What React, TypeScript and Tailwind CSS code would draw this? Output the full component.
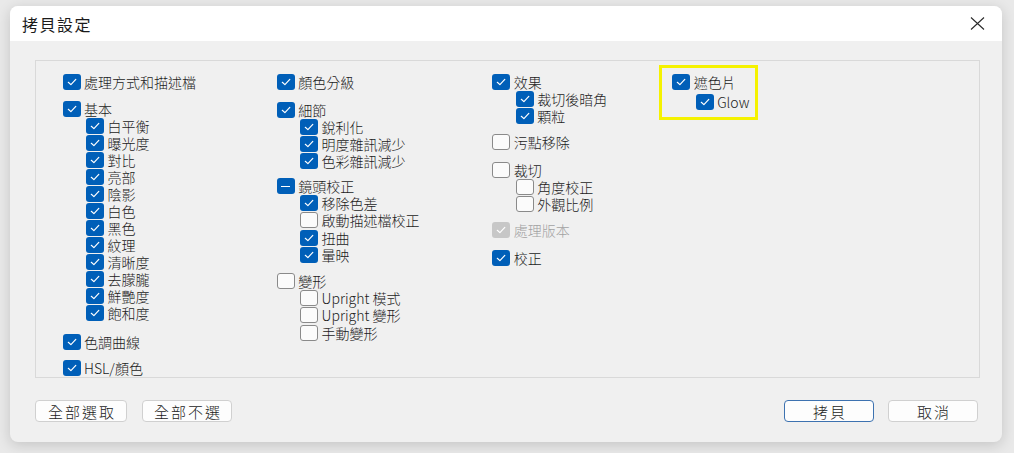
type State = "on" | "off" | "mixed" | "disabled";
type Item = { label: string; state: State; sub?: boolean; mt?: string };

// Row tops were read off the reference; `mt` carries the gap before a new group.
const col1: Item[] = [
  { label: "處理方式和描述檔", state: "on" },
  { label: "基本", state: "on", mt: "mt-[9.6px]" },
  { label: "白平衡", state: "on", sub: true },
  { label: "曝光度", state: "on", sub: true },
  { label: "對比", state: "on", sub: true },
  { label: "亮部", state: "on", sub: true },
  { label: "陰影", state: "on", sub: true },
  { label: "白色", state: "on", sub: true },
  { label: "黑色", state: "on", sub: true },
  { label: "紋理", state: "on", sub: true },
  { label: "清晰度", state: "on", sub: true },
  { label: "去朦朧", state: "on", sub: true },
  { label: "鮮艷度", state: "on", sub: true },
  { label: "飽和度", state: "on", sub: true },
  { label: "色調曲線", state: "on", mt: "mt-[11.5px]" },
  { label: "HSL/顏色", state: "on", mt: "mt-[9.6px]" },
];

const col2: Item[] = [
  { label: "顏色分級", state: "on" },
  { label: "細節", state: "on", mt: "mt-[10.6px]" },
  { label: "銳利化", state: "on", sub: true },
  { label: "明度雜訊減少", state: "on", sub: true },
  { label: "色彩雜訊減少", state: "on", sub: true },
  { label: "鏡頭校正", state: "mixed", mt: "mt-[8.2px]" },
  { label: "移除色差", state: "on", sub: true },
  { label: "啟動描述檔校正", state: "off", sub: true },
  { label: "扭曲", state: "on", sub: true },
  { label: "暈映", state: "on", sub: true },
  { label: "變形", state: "off", mt: "mt-[9.5px]" },
  { label: "Upright 模式", state: "off", sub: true },
  { label: "Upright 變形", state: "off", sub: true },
  { label: "手動變形", state: "off", sub: true },
];

const col3: Item[] = [
  { label: "效果", state: "on" },
  { label: "裁切後暗角", state: "on", sub: true },
  { label: "顆粒", state: "on", sub: true },
  { label: "污點移除", state: "off", mt: "mt-[8.7px]" },
  { label: "裁切", state: "off", mt: "mt-[10.4px]" },
  { label: "角度校正", state: "off", sub: true },
  { label: "外觀比例", state: "off", sub: true },
  { label: "處理版本", state: "disabled", mt: "mt-[9.5px]" },
  { label: "校正", state: "on", mt: "mt-[10.6px]" },
];

const col4: Item[] = [
  { label: "遮色片", state: "on" },
  { label: "Glow", state: "on", sub: true, mt: "mt-[3px]" },
];

function Box({ state }: { state: State }) {
  const base = "flex h-[16px] w-[18px] shrink-0 items-center justify-center rounded-[3px]";
  if (state === "off") {
    return <span className={`${base} border border-[#8a8a8a] bg-[#fbfbfb]`} />;
  }
  const bg = state === "disabled" ? "bg-[#c7c7c7]" : "bg-[#005fb8]";
  return (
    <span className={`${base} ${bg}`}>
      {state === "mixed" ? (
        <span className="h-[1.5px] w-[9px] bg-white" />
      ) : (
        <svg width="10" height="8" viewBox="0 0 10 8" fill="none">
          <path d="M1.3 4.3 L3.9 6.6 L8.8 1.4" stroke="white" strokeWidth="1.2" strokeLinecap="round" strokeLinejoin="round" />
        </svg>
      )}
    </span>
  );
}

function Column({ items, className }: { items: Item[]; className?: string }) {
  return (
    <div className={`flex flex-col ${className ?? ""}`}>
      {items.map((it) => (
        <div
          key={it.label}
          className={`flex h-[17.1px] items-center ${it.sub ? "pl-[23.4px]" : ""} ${it.mt ?? ""}`}
        >
          <Box state={it.state} />
          <span
            className={`ml-[3.5px] whitespace-nowrap text-[14px] font-light leading-none ${
              it.state === "disabled" ? "text-[#a2a2a2]" : "text-[#1b1b1b]"
            }`}
          >
            {it.label}
          </span>
        </div>
      ))}
    </div>
  );
}

function Button({ label, primary, className }: { label: string; primary?: boolean; className?: string }) {
  return (
    <button
      className={`flex h-[22px] items-center justify-center rounded-[4px] border bg-[#fdfdfd] pl-[2px] text-[15px] font-light leading-none tracking-[2px] text-[#1b1b1b] ${
        primary ? "border-[#3d72b0]" : "border-[#d0d0d0]"
      } ${className ?? ""}`}
    >
      {label}
    </button>
  );
}

export default function App() {
  return (
    <div className="h-[453px] w-[1014px] overflow-hidden bg-[#e9e9e9] pl-[10px] pt-[6px] font-['Noto_Sans_CJK_TC','Noto_Sans',sans-serif]">
      <div className="flex h-[435.5px] w-[991.5px] flex-col overflow-hidden rounded-[8px] bg-[#f0f0f0] shadow-[0_3px_14px_rgba(0,0,0,0.16)]">
        {/* title bar */}
        <div className="flex h-[35px] shrink-0 items-center justify-between bg-white pl-[12px] pr-[17px]">
          <span className="text-[16px] font-normal leading-none tracking-[1.5px] text-[#1b1b1b]">拷貝設定</span>
          <svg width="15" height="13" viewBox="0 0 15 13" fill="none">
            <path d="M1 0.5 L14 12.5 M14 0.5 L1 12.5" stroke="#2a2a2a" strokeWidth="1.1" />
          </svg>
        </div>

        <div className="flex flex-1 flex-col pl-[25px] pr-[21.5px] pt-[19px]">
          {/* group box */}
          <div className="flex h-[318px] border border-[#d9d9d9] bg-[#f0f0f0] pl-[26.5px] pt-[12.5px]">
            <Column items={col1} className="w-[214.2px]" />
            <Column items={col2} className="w-[215.6px]" />
            <Column items={col3} className="w-[180px]" />
            <div className="relative self-start">
              <Column items={col4} />
              <div className="pointer-events-none absolute left-[-13.3px] top-[-9px] h-[55.5px] w-[99px] border-[3px] border-[#f5f200]" />
            </div>
          </div>

          {/* buttons */}
          <div className="mt-[22px] flex items-center">
            <Button label="全部選取" className="w-[92px]" />
            <Button label="全部不選" className="ml-[15px] w-[90px]" />
            <div className="flex-1" />
            <Button label="拷貝" primary className="w-[90px]" />
            <Button label="取消" className="ml-[14px] mr-[2px] w-[90px]" />
          </div>
        </div>
      </div>
    </div>
  );
}
